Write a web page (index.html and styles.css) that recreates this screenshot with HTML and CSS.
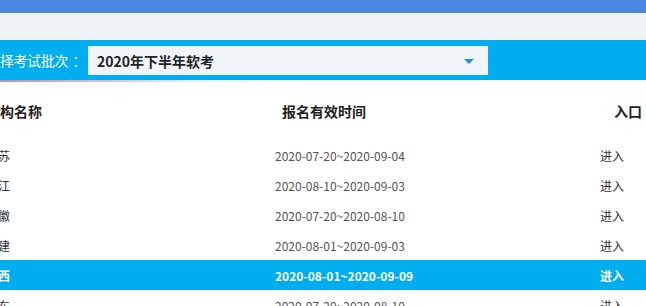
FILE: index.html
```html
<!DOCTYPE html>
<html lang="zh-CN">
<head>
    <meta charset="UTF-8">
    <meta name="viewport" content="width=device-width, initial-scale=1.0">
    <title>软考报名入口</title>
    <link rel="stylesheet" href="styles.css">
</head>
<body>
    <div class="page">
        <div class="topbar"></div>
        <div class="subbar"></div>

        <div class="batch-bar">
            <span class="batch-label">选择考试批次<span class="colon">：</span></span>
            <div class="batch-select">
                <span>2020年下半年软考</span>
                <span class="arrow"></span>
            </div>
        </div>
        <div class="batch-shadow"></div>

        <div class="table">
            <div class="row head">
                <div class="col-name">机构名称</div>
                <div class="col-date">报名有效时间</div>
                <div class="col-entry">入口</div>
            </div>
            <div class="row">
                <div class="col-name">江苏</div>
                <div class="col-date">2020-07-20~2020-09-04</div>
                <div class="col-entry">进入</div>
            </div>
            <div class="row">
                <div class="col-name">浙江</div>
                <div class="col-date">2020-08-10~2020-09-03</div>
                <div class="col-entry">进入</div>
            </div>
            <div class="row">
                <div class="col-name">安徽</div>
                <div class="col-date">2020-07-20~2020-08-10</div>
                <div class="col-entry">进入</div>
            </div>
            <div class="row">
                <div class="col-name">福建</div>
                <div class="col-date">2020-08-01~2020-09-03</div>
                <div class="col-entry">进入</div>
            </div>
            <div class="row active">
                <div class="col-name">江西</div>
                <div class="col-date">2020-08-01~2020-09-09</div>
                <div class="col-entry">进入</div>
            </div>
            <div class="row">
                <div class="col-name">广东</div>
                <div class="col-date">2020-07-20~2020-08-10</div>
                <div class="col-entry">进入</div>
            </div>
        </div>
    </div>
</body>
</html>
```

FILE: styles.css
```css
body {
    margin: 0;
    padding: 0;
    background-color: #fff;
    font-family: "Noto Sans CJK SC", "Noto Sans", sans-serif;
    color: #333;
    overflow: hidden;
}
.page {
    width: 660px;
    margin-left: -14px;
}
.topbar {
    height: 13px;
    background-color: #4a86e2;
}
.subbar {
    height: 27px;
    background-color: #eef3f8;
}
.batch-bar {
    height: 40px;
    background-color: #00aeef;
    display: flex;
    align-items: flex-start;
    padding-top: 6px;
    box-sizing: border-box;
}
.batch-label {
    color: #fff;
    font-size: 14px;
    line-height: 29px;
    width: 102px;
    letter-spacing: -0.3px;
}
.colon {
    padding-left: 4px;
}
.batch-select {
    width: 400px;
    height: 29px;
    background-color: #f0f5fa;
    display: flex;
    align-items: center;
    justify-content: space-between;
    padding: 0 14px 0 9px;
    box-sizing: border-box;
    font-size: 14px;
    font-weight: bold;
    color: #222;
}
.arrow {
    width: 0;
    height: 0;
    border-left: 5px solid transparent;
    border-right: 5px solid transparent;
    border-top: 5px solid #2b8bd8;
    margin-top: 2px;
}
.batch-shadow {
    height: 2px;
    background: linear-gradient(to right, rgba(190, 70, 110, 0.7), rgba(220, 160, 190, 0.3) 30%, rgba(255, 255, 255, 0) 50%);
}
.row {
    display: grid;
    grid-template-columns: 260px 314px 86px;
    height: 30px;
    align-items: center;
    font-size: 12px;
}
.row.head {
    height: 58px;
    font-size: 14px;
    font-weight: bold;
    color: #222;
}
.col-date {
    padding-left: 29px;
    color: #555;
}
.head .col-date {
    padding-left: 36px;
    color: #222;
}
.col-entry {
    padding-left: 40px;
}
.head .col-entry {
    padding-left: 54px;
}
.row.active {
    background-color: #00aeef;
    color: #fff;
    font-weight: bold;
}
.row.active .col-date {
    color: #fff;
}
```
